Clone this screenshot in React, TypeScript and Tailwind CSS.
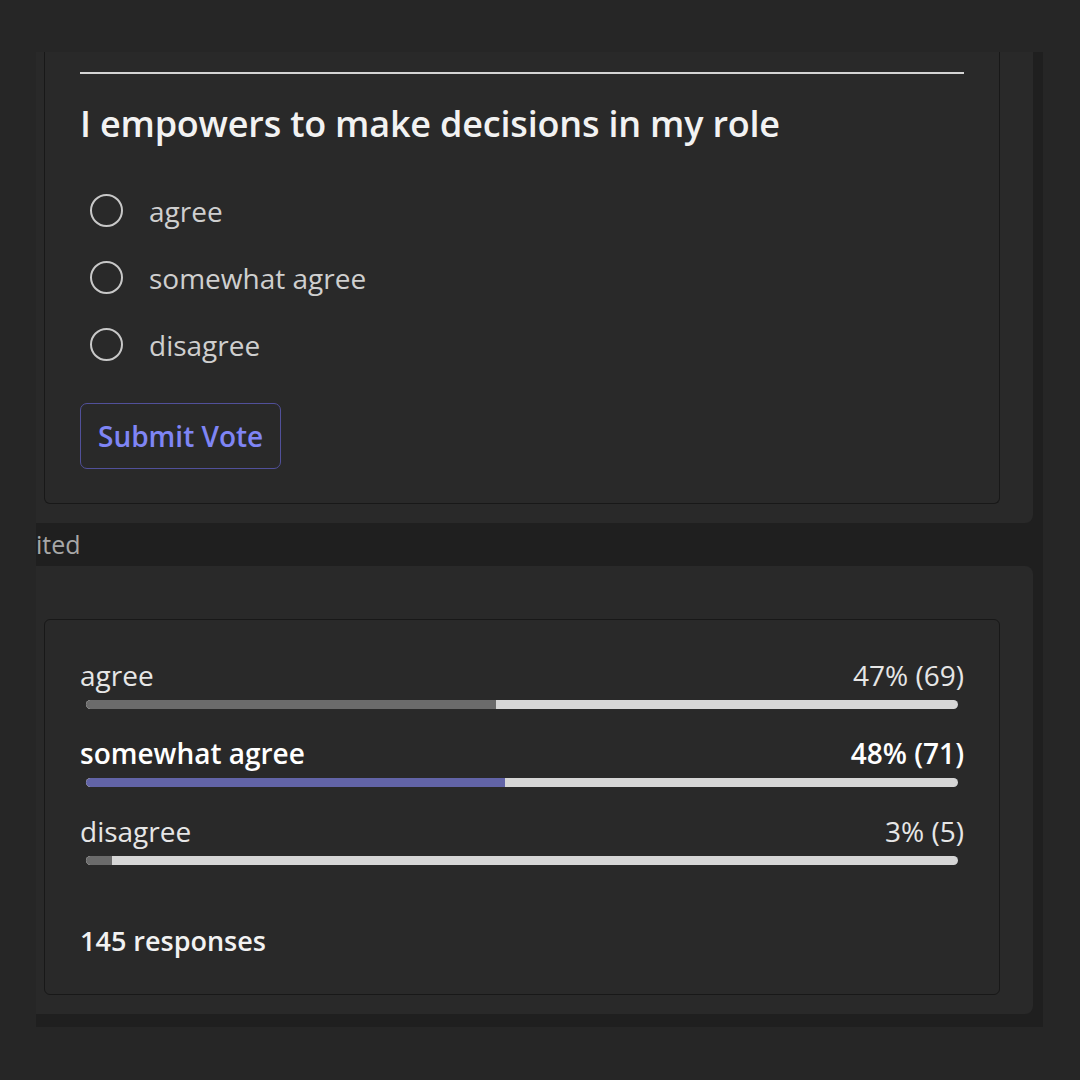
import { useState } from "react";

const options = ["agree", "somewhat agree", "disagree"];

const results = [
  { label: "agree", pct: 47, count: 69, mine: false },
  { label: "somewhat agree", pct: 48, count: 71, mine: true },
  { label: "disagree", pct: 3, count: 5, mine: false },
];

function PollCard() {
  const [picked, setPicked] = useState<string | null>(null);
  return (
    <div className="rounded-b-md border-x-[1.5px] border-b-[1.5px] border-[#181818] bg-[#292929] px-[35px] pt-[20px] pb-[34px]">
      <div className="h-[2px] bg-[#d4d4d4]" />
      <h2 className="mt-[28px] text-[36px] font-semibold leading-[44px] tracking-[-0.2px] text-[#f2f2f2]">
        I empowers to make decisions in my role
      </h2>
      <div className="mt-[42px] flex flex-col gap-[22px] pl-[10px]">
        {options.map((o) => (
          <button key={o} onClick={() => setPicked(o)} className="flex h-[45px] items-center gap-[26px] text-left">
            <span className="flex h-[33px] w-[33px] items-center justify-center rounded-full border-2 border-[#c8c8c8]">
              {picked === o && <span className="h-[17px] w-[17px] rounded-full bg-[#c8c8c8]" />}
            </span>
            <span className="text-[28px] text-[#cfcfcf]">{o}</span>
          </button>
        ))}
      </div>
      <button className="mt-[36px] h-[66px] rounded-[7px] border-[1.5px] border-[#51509a] px-[17px] text-[28px] font-semibold text-[#7f85f5]">
        Submit Vote
      </button>
    </div>
  );
}

function ResultsCard() {
  return (
    <div className="rounded-md border-[1.5px] border-[#181818] bg-[#292929] px-[35px] pt-[38px] pb-[32px]">
      <div className="flex flex-col gap-[27px]">
        {results.map((r) => (
          <div key={r.label}>
            <div className={`flex items-center justify-between text-[28px] leading-[34px] ${r.mine ? "font-semibold text-white" : "text-[#e6e6e6]"}`}>
              <span>{r.label}</span>
              <span>
                {r.pct}% ({r.count})
              </span>
            </div>
            <div className="mx-[6px] mt-[8px] h-[9px] overflow-hidden rounded-full bg-[#d6d6d6]">
              <div className={`h-full rounded-l-full ${r.mine ? "bg-[#6264a7]" : "bg-[#6b6b6b]"}`} style={{ width: `${r.pct}%` }} />
            </div>
          </div>
        ))}
      </div>
      <div className="mt-[56px] text-[27px] font-semibold text-[#f2f2f2]">145 responses</div>
    </div>
  );
}

export default function App() {
  return (
    <div className="h-[1080px] w-[1080px] bg-[#262626] pt-[52px] pl-[36px]" style={{ fontFamily: '"Open Sans", "Noto Sans", sans-serif' }}>
      <div className="w-[1007px] bg-[#1f1f1f] pb-[13px]">
        <div className="w-[997px] rounded-br-lg bg-[#292929] pr-[33px] pl-[8px] pb-[19px]">
          <PollCard />
        </div>
        <div className="flex h-[43px] items-center">
          <span className="text-[25px] text-[#a8a8a8]">ited</span>
        </div>
        <div className="w-[997px] rounded-r-lg bg-[#292929] pt-[53px] pr-[33px] pl-[8px] pb-[19px]">
          <ResultsCard />
        </div>
      </div>
    </div>
  );
}
